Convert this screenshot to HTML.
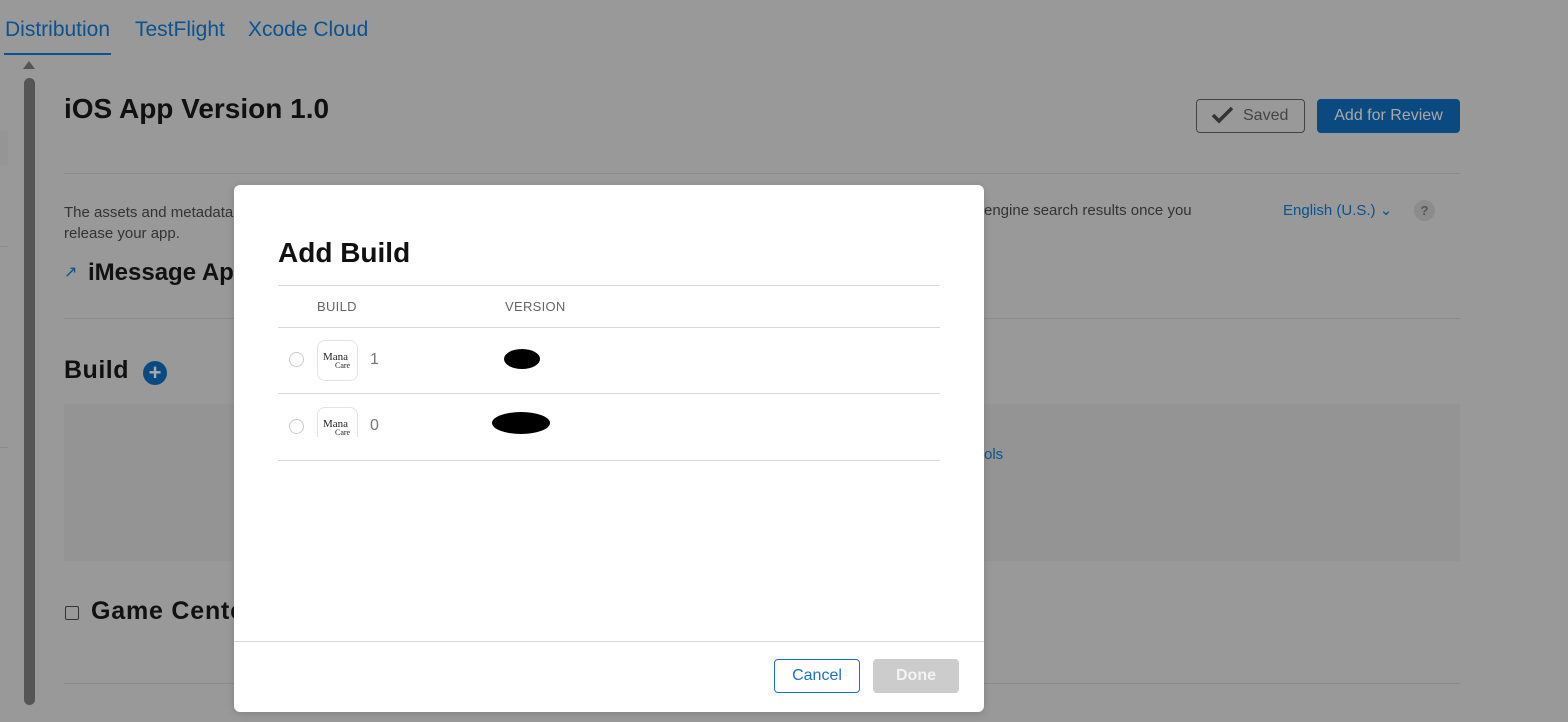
<!DOCTYPE html>
<html><head><style>
*{margin:0;padding:0;box-sizing:border-box}
body{width:1568px;height:722px;overflow:hidden;background:#999;font-family:"Liberation Sans",sans-serif;position:relative}
.a{position:absolute;white-space:nowrap}
.blue{color:#0b5290}
.line{position:absolute;height:1px;background:#8a8a8a}
.mline{position:absolute;height:1px;background:#d8d8d8}
</style></head><body>
<div class="a blue" style="left:5px;top:18px;font-size:21px">Distribution</div>
<div class="a" style="left:4px;top:53px;width:107px;height:2px;background:#0b5290"></div>
<div class="a blue" style="left:135px;top:18px;font-size:21px">TestFlight</div>
<div class="a blue" style="left:248px;top:18px;font-size:21px">Xcode Cloud</div>
<div class="a" style="left:23px;top:61px;width:0;height:0;border-left:6px solid transparent;border-right:6px solid transparent;border-bottom:8px solid #555"></div>
<div class="a" style="left:24px;top:78px;width:11px;height:627px;background:#555;border-radius:6px"></div>
<div class="a" style="left:-6px;top:130px;width:14px;height:36px;background:#959595;border-radius:4px"></div>
<div class="line" style="left:0;top:246px;width:8px"></div>
<div class="line" style="left:0;top:447px;width:8px"></div>

<div class="a" style="left:64px;top:93px;font-size:28px;font-weight:bold;color:#111">iOS App Version 1.0</div>
<div class="a" style="left:1196px;top:99px;width:109px;height:34px;border:1px solid #444;border-radius:4px;font-size:16px;color:#444;padding:7px 0 0 46px">Saved</div>
<svg class="a" style="left:1211px;top:106px" width="24" height="18"><path d="M2 9 L8 15 L21 2" stroke="#333" stroke-width="3.5" fill="none"/></svg>
<div class="a" style="left:1317px;top:99px;width:143px;height:34px;background:#0a4a80;border-radius:4px;color:#a9a9a9;font-size:16px;text-align:center;line-height:34px">Add for Review</div>
<div class="line" style="left:64px;top:173px;width:1396px"></div>
<div class="a" style="left:64px;top:202px;font-size:15px;color:#333;line-height:21px">The assets and metadata for this version will appear in search<br>release your app.</div>
<div class="a" style="left:984px;top:202px;font-size:15px;color:#333">engine search results once you</div>
<div class="a blue" style="left:1283px;top:201px;font-size:15px">English (U.S.) ⌄</div>
<div class="a" style="left:1414px;top:200px;width:21px;height:21px;border-radius:50%;background:#8c8c8c;color:#555;font-size:13px;font-weight:bold;text-align:center;line-height:21px">?</div>
<div class="a blue" style="left:64px;top:262px;font-size:16px">↗</div>
<div class="a" style="left:88px;top:259px;font-size:24px;font-weight:bold;color:#111">iMessage App</div>
<div class="line" style="left:64px;top:318px;width:1396px"></div>
<div class="a" style="left:64px;top:356px;font-size:25px;font-weight:bold;color:#111;letter-spacing:.5px">Build</div>
<div class="a" style="left:143px;top:361px;width:24px;height:24px;border-radius:50%;background:#0a4a80;color:#aaa;font-size:22px;font-weight:bold;text-align:center;line-height:24px">+</div>
<div class="a" style="left:64px;top:404px;width:1396px;height:157px;background:#949494"></div>
<div class="a blue" style="left:984px;top:446px;font-size:15px">ols</div>
<div class="a" style="left:65px;top:606px;width:14px;height:14px;border:1px solid #333;border-radius:2px"></div>
<div class="a" style="left:91px;top:597px;font-size:25px;font-weight:bold;color:#111;letter-spacing:.8px">Game Center</div>
<div class="line" style="left:64px;top:683px;width:1396px"></div>

<div class="a" style="left:234px;top:185px;width:750px;height:527px;background:#fff;border-radius:6px;box-shadow:0 2px 8px rgba(0,0,0,.15)">
<div class="a" style="left:44px;top:52px;font-size:28px;font-weight:bold;color:#111">Add Build</div>
<div class="mline" style="left:44px;top:100px;width:662px"></div>
<div class="a" style="left:83px;top:114px;font-size:13px;color:#666;letter-spacing:.3px">BUILD</div>
<div class="a" style="left:271px;top:114px;font-size:13px;color:#666;letter-spacing:.3px">VERSION</div>
<div class="mline" style="left:44px;top:142px;width:662px"></div>
<div class="a" style="left:55px;top:167px;width:15px;height:15px;border:1px solid #ccc;border-radius:50%"></div>
<div class="a" style="left:83px;top:155px;width:41px;height:41px;border:1px solid #e3e3e3;border-radius:8px;font-family:'Liberation Serif',serif;font-size:11px;color:#222;padding:12px 0 0 5px;line-height:8px">Mana<br><span style="font-size:8px;padding-left:12px">Care</span></div>
<div class="a" style="left:136px;top:166px;font-size:16px;color:#777">1</div>
<div class="a" style="left:270px;top:164px;width:36px;height:20px;background:#000;border-radius:50%"></div>
<div class="mline" style="left:44px;top:208px;width:662px"></div>
<div class="a" style="left:55px;top:234px;width:15px;height:15px;border:1px solid #ccc;border-radius:50%"></div>
<div class="a" style="left:83px;top:222px;width:41px;height:30px;border:1px solid #e3e3e3;border-bottom:none;border-radius:8px 8px 0 0;font-family:'Liberation Serif',serif;font-size:11px;color:#222;padding:12px 0 0 5px;line-height:8px">Mana<br><span style="font-size:8px;padding-left:12px">Care</span></div>
<div class="a" style="left:136px;top:232px;font-size:16px;color:#777">0</div>
<div class="a" style="left:258px;top:227px;width:58px;height:22px;background:#000;border-radius:50%"></div>
<div class="mline" style="left:44px;top:275px;width:662px"></div>
<div class="mline" style="left:0;top:456px;width:750px"></div>
<div class="a" style="left:540px;top:474px;width:86px;height:34px;border:1px solid #1a6fc4;border-radius:4px;color:#1a6fc4;font-size:16px;text-align:center;line-height:32px">Cancel</div>
<div class="a" style="left:639px;top:474px;width:86px;height:34px;background:#ccc;border-radius:4px;color:#f3f3f3;font-size:16px;font-weight:bold;text-align:center;line-height:34px">Done</div>
</div>
</body></html>
